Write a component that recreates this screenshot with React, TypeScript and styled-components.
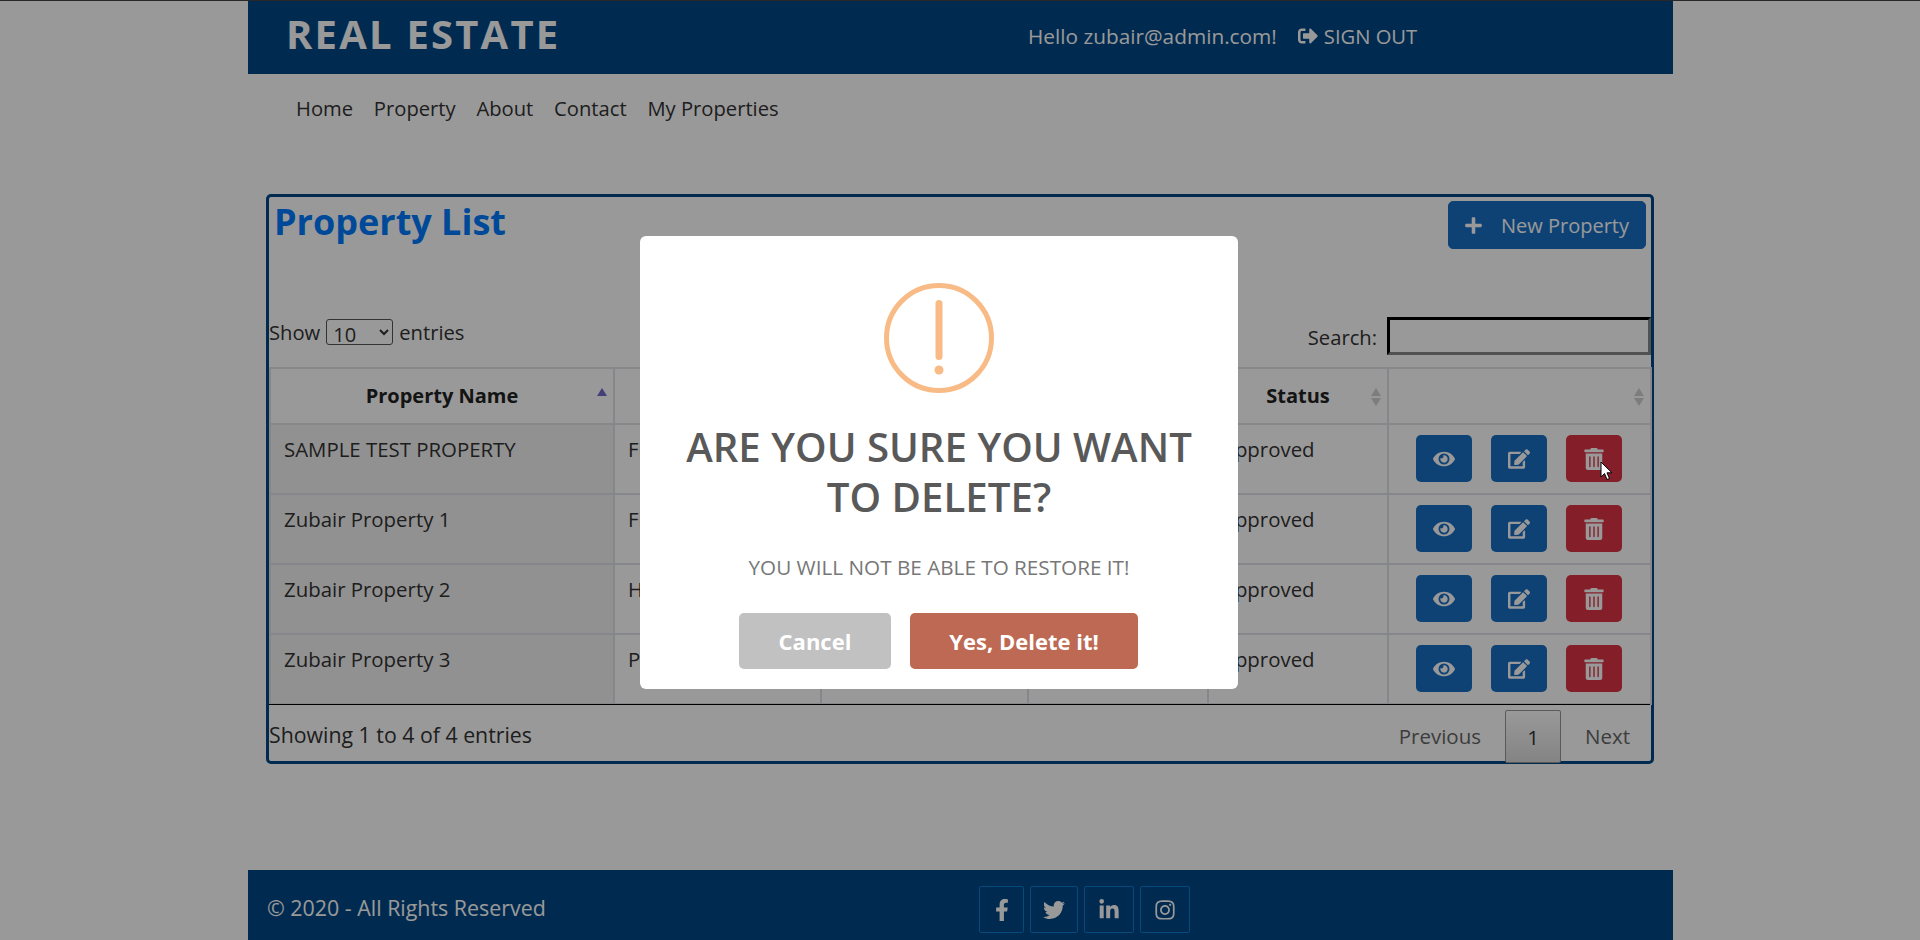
import React from "react";
import styled, { createGlobalStyle } from "styled-components";
import {
  FaEdit,
  FaEye,
  FaFacebookF,
  FaInstagram,
  FaLinkedinIn,
  FaPlus,
  FaSignOutAlt,
  FaTrashAlt,
  FaTwitter,
} from "react-icons/fa";

const GlobalStyle = createGlobalStyle`
  html, body {
    margin: 0;
    padding: 0;
    height: 940px;
    overflow: hidden;
    background: #fff;
    font-family: "Open Sans", sans-serif;
    color: #333;
  }
  * { box-sizing: border-box; }
`;

const Page = styled.div`
  width: 1425px;
  height: 940px;
  margin-left: 248px;
  display: flex;
  flex-direction: column;
`;

const TopLine = styled.div`
  position: fixed;
  top: 0;
  left: 0;
  right: 0;
  height: 1px;
  background: #444;
`;

const Header = styled.header`
  height: 74px;
  flex: none;
  background: #004685;
  display: flex;
  align-items: center;
  padding: 0 38px;
  color: #fff;
`;

const Logo = styled.div`
  font-size: 40px;
  font-weight: 700;
  letter-spacing: 2.2px;
  width: 742px;
  padding-bottom: 8px;
`;

const Hello = styled.span`
  font-size: 20.8px;
  margin-right: 21px;
  padding-bottom: 2px;
`;

const SignOut = styled.a`
  display: inline-flex;
  align-items: center;
  gap: 6px;
  font-size: 20.2px;
  padding-bottom: 2px;
`;

const Nav = styled.nav`
  height: 120px;
  flex: none;
  padding: 20px 48px 0;
  display: flex;
  gap: 20.8px;
  font-size: 20.2px;
  line-height: 28px;
  color: #333;
`;

const Card = styled.section`
  width: 1388px;
  height: 570px;
  margin-left: 18px;
  flex: none;
  border: 3px solid #004685;
  border-radius: 5px;
`;

const TitleRow = styled.div`
  height: 100px;
  display: flex;
  justify-content: space-between;
  align-items: flex-start;
  padding: 4px 5px 0 5px;
`;

const Title = styled.h2`
  margin: 0;
  font-size: 36px;
  line-height: 42px;
  font-weight: 700;
  color: #007bff;
`;

const NewButton = styled.button`
  width: 198px;
  height: 48px;
  border: 1px solid #186fc4;
  border-radius: 5px;
  background: #186fc4;
  color: #fff;
  font-family: inherit;
  font-size: 20px;
  display: flex;
  align-items: center;
  gap: 18px;
  padding: 0 15px;
  white-space: nowrap;
`;

const Controls = styled.div`
  height: 70px;
  display: flex;
  justify-content: space-between;
  padding-top: 22px;
  font-size: 20.2px;
`;

const ShowLabel = styled.label`
  display: flex;
  align-items: flex-start;
  gap: 6px;
  line-height: 26px;
  height: 26px;
`;

const Select = styled.select`
  width: 67px;
  height: 26px;
  padding: 0 0 0 2px;
  font-family: inherit;
  font-size: 20px;
  line-height: 24px;
  background: #fff;
  border: 1px solid #555;
  border-radius: 3px;
  color: #333;
`;

const SearchLabel = styled.label`
  display: flex;
  align-items: flex-start;
  gap: 10px;
  line-height: 40px;
  height: 38px;
  margin-top: -2px;
`;

const SearchInput = styled.input`
  width: 264px;
  height: 38px;
  border: 3px inset #333;
  background: #fff;
`;

const Table = styled.table`
  width: 1381px;
  table-layout: fixed;
  border-collapse: collapse;
  font-size: 20.4px;
`;

const Th = styled.th`
  position: relative;
  height: 56px;
  padding: 0 0 1px;
  border: 2px solid #dee2e6;
  border-bottom: 1px solid #000;
  font-weight: 700;
  text-align: center;
  color: #222;
  font-size: 20px;
`;

const Td = styled.td<{ $sorted?: boolean }>`
  height: 70px;
  border: 2px solid #dee2e6;
  padding: 11px 13px 0;
  vertical-align: top;
  line-height: 26px;
  overflow: hidden;
  background: ${(props) => (props.$sorted ? "#f2f2f2" : "transparent")};
`;

const ActionRow = styled.div`
  display: flex;
  justify-content: center;
  gap: 19px;
  margin-top: -1px;
  padding-right: 2px;
`;

const ActionButton = styled.button<{ $danger?: boolean }>`
  width: 56px;
  height: 47px;
  border: none;
  border-radius: 5px;
  background: ${(props) => (props.$danger ? "#dc3545" : "#186fc4")};
  color: #fff;
  font-size: 22px;
  display: flex;
  align-items: center;
  justify-content: center;
`;

const SortMark = styled.svg`
  position: absolute;
  right: 5px;
  top: 18px;
  width: 12px;
  height: 20px;
`;

const TableFoot = styled.div`
  display: flex;
  justify-content: space-between;
  align-items: flex-start;
  margin-top: -1px;
  border-top: 1px solid #000;
  font-size: 20.5px;
  width: 1381px;
`;

const Info = styled.div`
  padding-top: 17px;
  line-height: 26px;
  font-size: 21.3px;
`;

const Pager = styled.div`
  display: flex;
  align-items: flex-start;
  padding: 5px 20px 0 0;
  color: #666;
`;

const PagerLink = styled.span`
  line-height: 26px;
  padding-top: 13px;
`;

const PagerCurrent = styled.span`
  width: 56px;
  height: 53px;
  margin: 0 24px;
  border: 1px solid #979797;
  border-radius: 2px;
  background: linear-gradient(to bottom, #fff 0%, #dcdcdc 100%);
  color: #333;
  display: flex;
  align-items: center;
  justify-content: center;
`;

const Footer = styled.footer`
  margin-top: 106px;
  flex: 1;
  background: #004685;
  color: #fff;
  display: flex;
  align-items: flex-start;
  padding: 16px 0 0 19px;
`;

const Copyright = styled.div`
  width: 712px;
  font-size: 21.4px;
  line-height: 44px;
`;

const Socials = styled.div`
  display: flex;
  gap: 6px;
`;

const SocialBox = styled.a<{ $w: number }>`
  width: ${(props) => props.$w}px;
  height: 47px;
  border: 1px solid #0a7bd0;
  border-radius: 2px;
  display: flex;
  align-items: center;
  justify-content: center;
  font-size: 22px;
`;

const Backdrop = styled.div`
  position: fixed;
  inset: 0;
  background: rgba(0, 0, 0, 0.4);
  display: flex;
  justify-content: center;
  align-items: flex-start;
  padding: 236px 42px 0 0;
`;

const Modal = styled.div`
  width: 598px;
  height: 453px;
  background: #fff;
  border-radius: 6px;
  display: flex;
  flex-direction: column;
  align-items: center;
  padding-top: 47px;
`;

const WarningIcon = styled.svg`
  width: 110px;
  height: 110px;
  flex: none;
`;

const ModalTitle = styled.h2`
  margin: 29px 0 0;
  width: 540px;
  text-align: center;
  font-size: 40.2px;
  line-height: 50px;
  font-weight: 600;
  color: #595959;
`;

const ModalText = styled.p`
  margin: 32px 0 0;
  font-size: 20.7px;
  line-height: 26px;
  color: #777;
`;

const ModalActions = styled.div`
  display: flex;
  gap: 19px;
  margin: 33px 1px 0 0;
`;

const ModalButton = styled.button<{ $w: number; $bg: string }>`
  width: ${(props) => props.$w}px;
  height: 56px;
  border: none;
  border-radius: 5px;
  background: ${(props) => props.$bg};
  color: #fff;
  font-family: inherit;
  font-size: 22px;
  font-weight: 700;
`;

const Cursor = styled.svg`
  position: fixed;
  left: 1600px;
  top: 461px;
  width: 13px;
  height: 20px;
`;

const columns = [344, 207, 207, 180, 180, 263];
// the middle headers sit behind the dialog in the picture
const headers = ["Property Name", "", "", "", "Status", ""];

const rows = [
  { name: "SAMPLE TEST PROPERTY", type: "Flat" },
  { name: "Zubair Property 1", type: "Flat" },
  { name: "Zubair Property 2", type: "House" },
  { name: "Zubair Property 3", type: "Plot" },
];

function Sort({ active }: { active?: boolean }) {
  return (
    <SortMark viewBox="0 0 12 20">
      <path d="M6 1 L11 9 H1 Z" fill={active ? "#6f6acb" : "#d0d0d0"} />
      {!active && <path d="M6 19 L11 11 H1 Z" fill="#d0d0d0" />}
    </SortMark>
  );
}

export default function App() {
  return (
    <>
      <GlobalStyle />
      <TopLine />
      <Page>
        <Header>
          <Logo>REAL ESTATE</Logo>
          <Hello>Hello zubair@admin.com!</Hello>
          <SignOut>
            <FaSignOutAlt size={20} />
            SIGN OUT
          </SignOut>
        </Header>
        <Nav>
          <span>Home</span>
          <span>Property</span>
          <span>About</span>
          <span>Contact</span>
          <span>My Properties</span>
        </Nav>
        <Card>
          <TitleRow>
            <Title>Property List</Title>
            <NewButton>
              <FaPlus size={19} />
              New Property
            </NewButton>
          </TitleRow>
          <Controls>
            <ShowLabel>
              Show
              <Select defaultValue="10">
                <option>10</option>
                <option>25</option>
              </Select>
              entries
            </ShowLabel>
            <SearchLabel>
              Search:
              <SearchInput />
            </SearchLabel>
          </Controls>
          <Table>
            <colgroup>
              {columns.map((w, i) => (
                <col key={i} style={{ width: w }} />
              ))}
            </colgroup>
            <thead>
              <tr>
                {headers.map((h, i) => (
                  <Th key={i}>
                    {h}
                    <Sort active={i === 0} />
                  </Th>
                ))}
              </tr>
            </thead>
            <tbody>
              {rows.map((r) => (
                <tr key={r.name}>
                  <Td $sorted>{r.name}</Td>
                  <Td>{r.type}</Td>
                  <Td />
                  <Td />
                  <Td>Approved</Td>
                  <Td>
                    <ActionRow>
                      <ActionButton>
                        <FaEye />
                      </ActionButton>
                      <ActionButton>
                        <FaEdit />
                      </ActionButton>
                      <ActionButton $danger>
                        <FaTrashAlt />
                      </ActionButton>
                    </ActionRow>
                  </Td>
                </tr>
              ))}
            </tbody>
          </Table>
          <TableFoot>
            <Info>Showing 1 to 4 of 4 entries</Info>
            <Pager>
              <PagerLink>Previous</PagerLink>
              <PagerCurrent>1</PagerCurrent>
              <PagerLink>Next</PagerLink>
            </Pager>
          </TableFoot>
        </Card>
        <Footer>
          <Copyright>© 2020 - All Rights Reserved</Copyright>
          <Socials>
            <SocialBox $w={45}>
              <FaFacebookF />
            </SocialBox>
            <SocialBox $w={48}>
              <FaTwitter />
            </SocialBox>
            <SocialBox $w={50}>
              <FaLinkedinIn />
            </SocialBox>
            <SocialBox $w={50}>
              <FaInstagram />
            </SocialBox>
          </Socials>
        </Footer>
      </Page>
      <Backdrop>
        <Modal>
          <WarningIcon viewBox="0 0 110 110">
            <circle cx="55" cy="55" r="52.5" fill="none" stroke="#f8bb86" strokeWidth="5" />
            <rect x="51.5" y="17" width="7" height="60" rx="3.5" fill="#f8bb86" />
            <circle cx="55" cy="87" r="4.5" fill="#f8bb86" />
          </WarningIcon>
          <ModalTitle>ARE YOU SURE YOU WANT TO DELETE?</ModalTitle>
          <ModalText>YOU WILL NOT BE ABLE TO RESTORE IT!</ModalText>
          <ModalActions>
            <ModalButton $w={152} $bg="#c1c1c1">
              Cancel
            </ModalButton>
            <ModalButton $w={228} $bg="#bd6954">
              Yes, Delete it!
            </ModalButton>
          </ModalActions>
        </Modal>
      </Backdrop>
      <Cursor viewBox="0 0 13 20">
        <path d="M1 1 V16 L4.5 12.5 L7 18.5 L9.5 17.5 L7 11.8 H12 Z" fill="#fff" stroke="#000" strokeWidth="1" />
      </Cursor>
    </>
  );
}
